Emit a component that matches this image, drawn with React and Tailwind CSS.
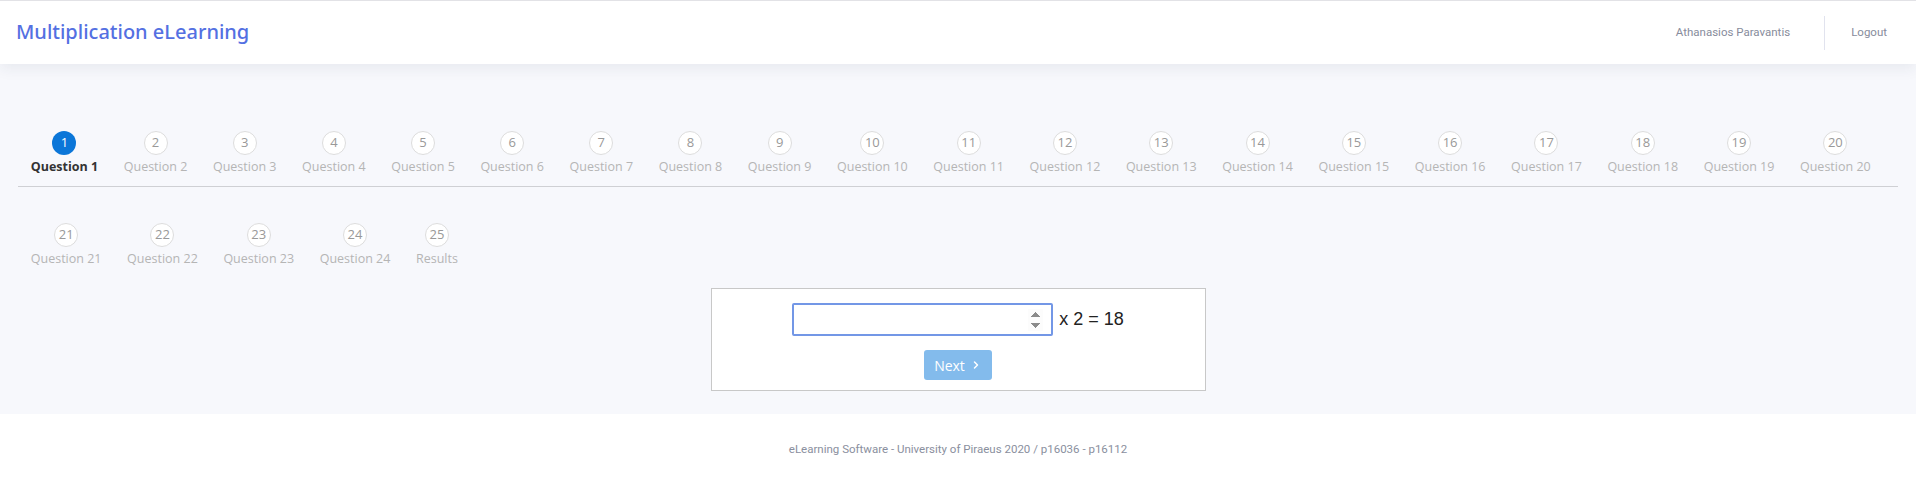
import { ChevronRight } from 'lucide-react'

const firstRow = Array.from({ length: 20 }, (_, i) => ({ num: i + 1, label: `Question ${i + 1}` }))
const secondRow = [
  ...Array.from({ length: 4 }, (_, i) => ({ num: i + 21, label: `Question ${i + 21}` })),
  { num: 25, label: 'Results' },
]

function Step({ num, label, active }) {
  return (
    <div className="flex flex-col items-center whitespace-nowrap px-[12.8px]">
      <div
        className={
          active
            ? 'flex h-6 w-6 items-center justify-center rounded-full bg-[#0b76d8] text-[13px] text-white'
            : 'flex h-6 w-6 items-center justify-center rounded-full border border-[#dddddd] bg-white text-[13px] text-[#999999]'
        }
      >
        {num}
      </div>
      <div
        className={
          active
            ? 'mt-[3px] text-[12.5px] font-bold leading-[18px] text-[#333333]'
            : 'mt-[3px] text-[12.5px] leading-[18px] text-[#b5b5b5]'
        }
      >
        {label}
      </div>
    </div>
  )
}

export default function App() {
  return (
    <div className="min-h-[494px] bg-white font-['Open_Sans',sans-serif]">
      <header className="relative z-10 flex h-16 items-center justify-between border-t border-[#e2e2e6] bg-white shadow-[0_4px_14px_rgba(40,50,80,0.08)]">
        <h1 className="pl-4 pb-[2px] font-['Noto_Sans',sans-serif] text-[20px] font-medium text-[#5470e2]">
          Multiplication eLearning
        </h1>
        <div className="flex h-full items-center font-['Roboto',sans-serif] text-[11.5px] text-[#878c9c]">
          <span className="pr-[34px]">Athanasios Paravantis</span>
          <div className="h-[34px] w-px bg-[#e1e3ee]" />
          <span className="pl-[26px] pr-[29px]">Logout</span>
        </div>
      </header>

      <main className="flex h-[350px] flex-col bg-[#f7f8fc] px-[18px] pt-[67px]">
        <div className="flex border-b border-[#cfd0d4] pb-[10px]">
          {firstRow.map((step) => (
            <Step key={step.num} {...step} active={step.num === 1} />
          ))}
        </div>
        <div className="mt-[36px] flex">
          {secondRow.map((step) => (
            <Step key={step.num} {...step} />
          ))}
        </div>

        <div className="mx-auto mt-[20px] flex w-[495px] flex-col items-center border border-[#c8c8c8] bg-white pt-[14px] pb-[10px]">
          <div className="flex items-center">
            <input
              type="number"
              autoFocus
              className="h-[33px] w-[261px] rounded-[2px] border-2 border-[#7397e6] bg-white px-2 outline-none"
            />
            <span className="ml-[6px] font-['Liberation_Sans',sans-serif] text-[18px] text-[#222222]">x 2 = 18</span>
          </div>
          <button className="mt-[14px] flex h-[30px] w-[68px] items-center justify-center gap-[5px] rounded-[3px] bg-[#83bbec] text-[14px] text-white">
            Next
            <ChevronRight className="h-3 w-3" strokeWidth={3} />
          </button>
        </div>
      </main>

      <footer className="flex h-[80px] justify-center pt-[27px] font-['Roboto',sans-serif] text-[11.5px] text-[#8a8f9e]">
        eLearning Software - University of Piraeus 2020 / p16036 - p16112
      </footer>
    </div>
  )
}
